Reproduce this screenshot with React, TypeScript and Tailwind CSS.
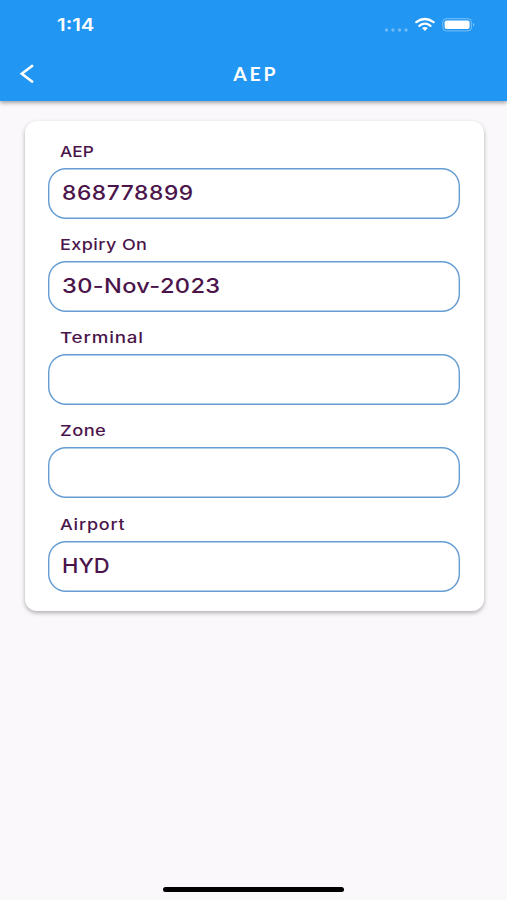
const fields = [
  { label: 'AEP', value: '868778899', labelCls: 'scale-x-[1.15] tracking-[0.1px]', valueCls: 'scale-x-[1.14] tracking-[0.5px]' },
  { label: 'Expiry On', value: '30-Nov-2023', labelCls: 'scale-x-[1.2] tracking-[0.35px]', valueCls: 'scale-x-[1.18] tracking-[0.3px]' },
  { label: 'Terminal', value: '', labelCls: 'scale-x-[1.25] tracking-[0.65px]', valueCls: '' },
  { label: 'Zone', value: '', labelCls: 'scale-x-[1.22] tracking-[0.35px]', valueCls: '' },
  { label: 'Airport', value: 'HYD', labelCls: 'scale-x-[1.2] tracking-[0.65px]', valueCls: 'scale-x-[1.1] tracking-[0px]' },
];

function StatusIcons() {
  return (
    <svg className="h-6 w-[100px]" viewBox="0 0 100 24" fill="none" aria-hidden="true">
      <g fill="#fff" fillOpacity="0.35">
        <circle cx="6.5" cy="17" r="1.7" />
        <circle cx="13" cy="17" r="1.7" />
        <circle cx="19.5" cy="17" r="1.7" />
        <circle cx="26" cy="17" r="1.7" />
      </g>
      <path d="M36.2 9.2Q44.9 2.8 53.6 9.2M39.3 12.8Q44.9 8.6 50.5 12.8" stroke="#fff" strokeWidth="2.2" strokeLinecap="round" />
      <path d="M42 15Q44.9 12.9 47.8 15L44.9 18Z" fill="#fff" />
      <rect x="62.8" y="5.7" width="28.6" height="12.2" rx="3.5" stroke="#fff" strokeOpacity="0.4" />
      <rect x="64.6" y="7.5" width="25" height="8.6" rx="2" fill="#fff" />
      <path d="M93 9.8Q95.6 11.8 93 13.8Z" fill="#fff" fillOpacity="0.45" />
    </svg>
  );
}

function Field({ label, value, labelCls, valueCls }: (typeof fields)[number]) {
  return (
    <div>
      <div className="flex h-[34px] items-center pl-[12px] pt-px text-[15px] font-medium leading-none">
        <span className={`origin-left whitespace-nowrap ${labelCls}`}>{label}</span>
      </div>
      <div className="flex h-[51px] items-center rounded-[18px] pl-[13.5px] text-[20px] font-medium leading-none shadow-[inset_0_0_0_1.4px_#659dd2]">
        <span className={`origin-left whitespace-nowrap ${valueCls}`}>{value}</span>
      </div>
    </div>
  );
}

export default function App() {
  return (
    <div className="flex h-[900px] w-[507px] flex-col overflow-hidden bg-[#faf8fb] font-['Inter',sans-serif] text-[#4b154b]">
      <header className="h-[101px] shrink-0 bg-[#2196f3] text-white shadow-[0_2px_4px_rgba(0,0,0,0.35)]">
        <div className="flex h-[49px] items-center justify-between pl-[57px] pr-[27px]">
          <span className="origin-left scale-x-[1.2] pt-px text-[17px] font-semibold leading-none">1:14</span>
          <StatusIcons />
        </div>
        <div className="grid h-[50px] grid-cols-[60px_1fr_60px] items-center">
          <svg className="ml-[19px] h-6 w-4" viewBox="0 0 16 24" fill="none" aria-hidden="true">
            <path d="M14 3.2L2.8 11.7L14 20.2" stroke="currentColor" strokeWidth="2.6" />
          </svg>
          <h1 className="pl-[4px] text-center font-['Lato'] text-[18px] font-bold leading-none tracking-[2.5px]">
            <span className="inline-block scale-x-[1.08]">AEP</span>
          </h1>
        </div>
      </header>

      <main className="ml-[24.5px] mr-[23.5px] mt-5 flex h-[490px] shrink-0 flex-col gap-[8.25px] rounded-[12px] bg-white px-[23.5px] pt-[12.6px] shadow-[0_2px_4px_rgba(0,0,0,0.3)]">
        {fields.map((f) => (
          <Field key={f.label} {...f} />
        ))}
      </main>

      <div className="mx-auto mb-[8px] mt-auto h-[5px] w-[181px] rounded-full bg-black" />
    </div>
  );
}
